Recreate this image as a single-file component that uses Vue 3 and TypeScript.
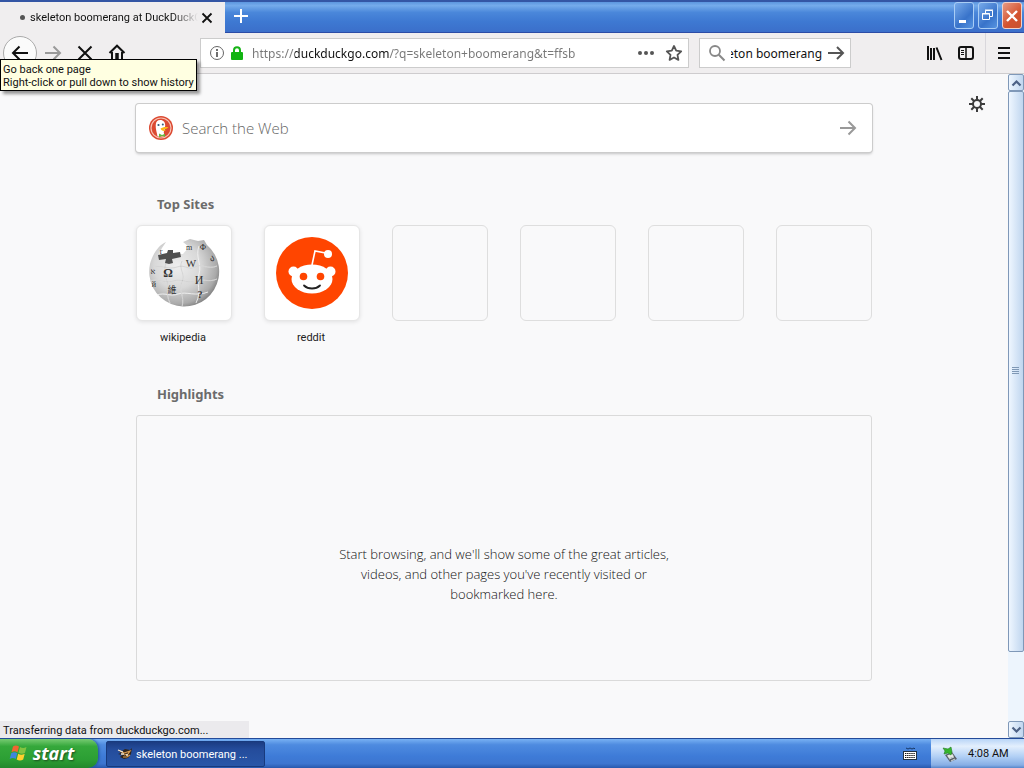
<script setup lang="ts">
import { onMounted, ref } from 'vue'

interface Site {
  name: string
}

const sites: Site[] = [{ name: 'wikipedia' }, { name: 'reddit' }]
const emptyTiles = 4
const address = ref<string>('https://duckduckgo.com/?q=skeleton+boomerang&t=ffsb')
const query = ref<string>('skeleton boomerang')
const webQuery = ref<string>('')
const queryBox = ref<HTMLInputElement | null>(null)

onMounted(() => {
  // Keep the end of a long query in view
  const box = queryBox.value
  if (box) box.scrollLeft = box.scrollWidth
})
</script>

<template>
  <div class="screen">
    <header class="titlebar">
      <div class="tab">
        <span class="tab-dot"></span>
        <span class="tab-title">skeleton boomerang at DuckDuckGo</span>
        <button class="tab-close" aria-label="Close tab">
          <svg width="12" height="12" viewBox="0 0 12 12"><path d="M1.5 1.5l9 9M10.5 1.5l-9 9" stroke="#111" stroke-width="1.800" fill="none" /></svg>
        </button>
      </div>
      <button class="new-tab" aria-label="New tab">
        <svg width="16" height="16" viewBox="0 0 16 16"><path d="M8 1v14M1 8h14" stroke="#fff" stroke-width="2" /></svg>
      </button>
      <div class="window-buttons">
        <button class="win" aria-label="Minimize">
          <svg width="18" height="22" viewBox="0 0 18 22"><path d="M4 16.500h7" stroke="#fff" stroke-width="3" /></svg>
        </button>
        <button class="win" aria-label="Restore">
          <svg width="18" height="22" viewBox="0 0 18 22" fill="none" stroke="#fff"><path d="M6.500 8V5.500h7v6H11M6 5h8" /><path d="M3.500 8.500h7v6h-7zM3 9h8" /></svg>
        </button>
        <button class="win win-close" aria-label="Close">
          <svg width="18" height="22" viewBox="0 0 18 22"><path d="M4 6l10 10M14 6L4 16" stroke="#fff" stroke-width="2.400" /></svg>
        </button>
      </div>
    </header>

    <nav class="toolbar">
      <button class="tool back" aria-label="Back">
        <svg width="18" height="16" viewBox="0 0 18 16" fill="none" stroke="#111" stroke-width="2"><path d="M17 8H2M8.500 1.500L2 8l6.500 6.500" /></svg>
      </button>
      <button class="tool" aria-label="Forward">
        <svg width="18" height="16" viewBox="0 0 18 16" fill="none" stroke="#999" stroke-width="2"><path d="M1 8h15M9.500 1.500L16 8l-6.500 6.500" /></svg>
      </button>
      <button class="tool" aria-label="Stop">
        <svg width="16" height="16" viewBox="0 0 16 16" fill="none" stroke="#111" stroke-width="2"><path d="M1.500 1.500l13 13M14.500 1.500l-13 13" /></svg>
      </button>
      <button class="tool" aria-label="Home">
        <svg width="18" height="18" viewBox="0 0 18 18" fill="none" stroke="#111" stroke-width="2"><path d="M1.500 9L9 1.700 16.500 9M4 8v8h10V8" /><path d="M9 9v7" stroke-width="3.500" /></svg>
      </button>

      <div class="tooltip" role="tooltip">Go back one page<br />Right-click or pull down to show history</div>

      <div class="field address">
        <svg width="16" height="16" viewBox="0 0 16 16"><circle cx="8" cy="8" r="6.500" fill="none" stroke="#666" /><path d="M8 4v2M8 7v5" stroke="#555" stroke-width="1.700" /></svg>
        <svg class="lock" width="14" height="16" viewBox="0 0 14 16"><path d="M4 8V5.200a3 3 0 0 1 6 0V8" fill="none" stroke="#16b316" stroke-width="2" /><rect x="1" y="7" width="12" height="8" rx="1" fill="#12b412" /></svg>
        <input v-model="address" class="url" type="text" aria-label="Address" spellcheck="false" />
        <button class="plain" aria-label="Page actions">
          <svg width="18" height="16" viewBox="0 0 18 16" fill="#555"><circle cx="3" cy="8" r="2" /><circle cx="9" cy="8" r="2" /><circle cx="15" cy="8" r="2" /></svg>
        </button>
        <button class="plain star" aria-label="Bookmark this page">
          <svg width="18" height="18" viewBox="0 0 18 18"><path d="M9 2l2.200 4.600 5 .7-3.700 3.500.9 5.100L9 13.500l-4.400 2.400.9-5.100L1.800 7.300l5-.7z" fill="none" stroke="#555" stroke-width="1.800" stroke-linejoin="round" /></svg>
        </button>
      </div>

      <div class="field search">
        <svg width="18" height="18" viewBox="0 0 18 18" fill="none" stroke="#888" stroke-width="1.800"><circle cx="7" cy="7" r="5" /><path d="M10.800 10.800L16.500 16.500" stroke-width="2" /></svg>
        <input ref="queryBox" v-model="query" class="query" type="text" aria-label="Search" spellcheck="false" />
        <button class="plain" aria-label="Search">
          <svg width="18" height="16" viewBox="0 0 18 16" fill="none" stroke="#555" stroke-width="2"><path d="M1 8h15M10 2l6 6-6 6" /></svg>
        </button>
      </div>

      <div class="extras">
        <button class="tool" aria-label="Library">
          <svg width="17" height="16" viewBox="0 0 17 16" fill="none" stroke="#111" stroke-width="2"><path d="M2 1v14M5 3v12M8 3v12M10.500 2.500L15.500 15" /></svg>
        </button>
        <button class="tool" aria-label="Sidebars">
          <svg width="16" height="16" viewBox="0 0 16 16" fill="none" stroke="#111"><rect x="1" y="2" width="14" height="12" rx="2" stroke-width="2" /><path d="M8 2v12" stroke-width="1.500" /><path d="M3 5.500h3M3 7.500h3M3 9.500h3" /></svg>
        </button>
        <button class="tool menu" aria-label="Open menu">
          <svg width="14" height="14" viewBox="0 0 14 14" stroke="#111" stroke-width="2"><path d="M1 2h12M1 7h12M1 12h12" /></svg>
        </button>
      </div>
    </nav>

    <div class="viewport">
      <main class="page">
        <button class="settings plain" aria-label="Customize your page">
          <svg width="18" height="18" viewBox="0 0 18 18" fill="none" stroke="#3c3c3c"><circle cx="9" cy="9" r="4" stroke-width="2" /><path d="M9 1v4M9 13v4M1 9h4M13 9h4M3.300 3.300l2.900 2.900M11.800 11.800l2.900 2.900M3.300 14.700l2.900-2.900M11.800 6.200l2.900-2.900" stroke-width="2" /></svg>
        </button>

        <div class="content">
          <form class="web-search" @submit.prevent>
            <svg width="24" height="24" viewBox="0 0 24 24">
              <circle cx="12" cy="12" r="12" fill="#dc4a32" />
              <circle cx="12" cy="12" r="10" fill="none" stroke="#f7c3b5" stroke-width="1.200" />
              <path d="M8.500 20.500C8 17 6.500 13 6.700 9c.2-3.500 1.800-5 4.500-5 3.300 0 5 2.300 5 5.500l-.5 4-1 2.500.8 4.500z" fill="#fff" />
              <circle cx="9.500" cy="9" r="1.100" fill="#315b79" /><circle cx="13.800" cy="8.500" r="1" fill="#315b79" />
              <path d="M11.500 12.500c2-1.500 5-2 8-1.300-1 1.300-3 1.800-5 2.300l2.500 1c-2 .8-5 .5-5.500-2z" fill="#fdb515" />
              <path d="M10 17.500l3 1.500 3-1.300v3l-3-.8-3 1.500z" fill="#65b83f" />
            </svg>
            <input v-model="webQuery" type="text" placeholder="Search the Web" aria-label="Search the Web" />
            <button class="plain" aria-label="Submit search">
              <svg width="18" height="16" viewBox="0 0 18 16" fill="none" stroke="#999" stroke-width="2"><path d="M1 8h15M9.500 1.500L16 8l-6.500 6.500" /></svg>
            </button>
          </form>

          <section>
            <h2>Top Sites</h2>
            <div class="tiles">
              <a v-for="site in sites" :key="site.name" class="site" href="#">
                <span class="tile">
                  <svg v-if="site.name === 'wikipedia'" width="74" height="74" viewBox="0 0 74 74">
                    <defs>
                      <radialGradient id="globe" cx=".4" cy=".4" r=".66">
                        <stop offset="0" stop-color="#eee" /><stop offset=".5" stop-color="#d8d8d8" /><stop offset=".85" stop-color="#aaa" /><stop offset="1" stop-color="#777" />
                      </radialGradient>
                    </defs>
                    <path d="M19 6L15 12l-4 8 8 1 9-3 8 0 6-7-6-5 7-3 8 2 6-1 3 5A35 35 0 1 1 3 28C6 17 12 9 19 6z" fill="url(#globe)" />
                    <path d="M7 31c9-2 15 3 23 0s12 4 18 0 13 3 22-1M3 45c10-3 14 3 23 0s14 3 22 0 13 2 22-2M10 59c8-3 13 2 21-1s18 3 30-2M18 20c3 8-3 13 1 22s-1 15 4 25M35 25c-4 8 4 13 0 21s3 14 0 25M52 10c-4 11 3 18 0 28s3 17-3 29" fill="none" stroke="#f2f2f2" stroke-width=".9" />
                    <path d="M7 31c9-2 15 3 23 0s12 4 18 0 13 3 22-1M3 45c10-3 14 3 23 0s14 3 22 0 13 2 22-2M18 20c3 8-3 13 1 22s-1 15 4 25M35 25c-4 8 4 13 0 21s3 14 0 25" fill="none" stroke="#aaa" stroke-width=".4" />
                    <path d="M11 19l9-2 1-3 5 0 0 3 7-1 1 5-9 2 1 4-4 1-4-1 1-4-7 1z" fill="#505050" />
                    <g fill="#333" font-family="Liberation Serif, serif" text-anchor="middle">
                      <text x="21" y="41" font-size="12" font-weight="bold">Ω</text>
                      <text x="44" y="31" font-size="11">W</text>
                      <text x="52" y="48" font-size="12">И</text>
                      <text x="53" y="62" font-size="10" font-weight="bold">?</text>
                      <text x="25" y="57" font-size="9" font-family="Noto Sans CJK SC, sans-serif">維</text>
                      <text x="56" y="14" font-size="8">Ф</text>
                      <text x="65" y="25" font-size="9">ა</text>
                      <text x="42" y="14" font-size="8">m</text>
                      <text x="6" y="38" font-size="8">א</text>
                      <text x="7" y="51" font-size="8">й</text>
                      <text x="14" y="18" font-size="8">r</text>
                    </g>
                  </svg>
                  <svg v-else width="74" height="74" viewBox="0 0 74 74">
                    <circle cx="37" cy="37" r="36" fill="#ff4500" />
                    <path d="M37 29l3-14 13 2.500" fill="none" stroke="#fff" stroke-width="1.600" />
                    <circle cx="53" cy="18" r="4" fill="#fff" />
                    <circle cx="18.500" cy="35.500" r="5" fill="#fff" /><circle cx="55.500" cy="35.500" r="5" fill="#fff" />
                    <ellipse cx="37" cy="43" rx="20.500" ry="14.500" fill="#fff" />
                    <circle cx="28.500" cy="40.500" r="3.800" fill="#ff4500" /><circle cx="45.500" cy="40.500" r="3.800" fill="#ff4500" />
                    <path d="M29 49.500c4 4 12 4 16 0" fill="none" stroke="#222" stroke-width="1.800" stroke-linecap="round" />
                  </svg>
                </span>
                <span class="site-name">{{ site.name }}</span>
              </a>
              <div v-for="n in emptyTiles" :key="n" class="tile empty"></div>
            </div>
          </section>

          <section>
            <h2>Highlights</h2>
            <div class="highlights">
              <p>Start browsing, and we'll show some of the great articles, videos, and other pages you've recently visited or bookmarked here.</p>
            </div>
          </section>
        </div>
        <div class="status" role="status">Transferring data from duckduckgo.com...</div>
      </main>

      <div class="scrollbar">
        <button class="scroll-arrow" aria-label="Scroll up">
          <svg width="11" height="8" viewBox="0 0 11 8"><path d="M1.500 6.500l4-4 4 4" fill="none" stroke="#4d6185" stroke-width="2.200" /></svg>
        </button>
        <div class="track">
          <div class="thumb">
            <svg width="8" height="8" viewBox="0 0 8 8"><path d="M0 .5h7M0 2.500h7M0 4.500h7M0 6.500h7" stroke="#7f98b5" /></svg>
          </div>
        </div>
        <button class="scroll-arrow" aria-label="Scroll down">
          <svg width="11" height="8" viewBox="0 0 11 8"><path d="M1.500 1.500l4 4 4-4" fill="none" stroke="#4d6185" stroke-width="2.200" /></svg>
        </button>
      </div>
    </div>

    <footer class="taskbar">
      <button class="start">
        <svg width="20" height="20" viewBox="0 0 20 20">
          <path d="M4 3.500c2-1.500 4-1.300 6 0L8.500 9.300c-2-1.200-4-1.300-6 0z" fill="#f26532" />
          <path d="M11 4c2 1.200 4 1.300 6.500 0L16 9.800c-2 1.200-4.200 1.200-6.500 0z" fill="#83c341" />
          <path d="M2.200 10.300c2-1.300 4-1.200 6 0L6.700 16c-2-1.300-4-1.200-6 0z" fill="#3d86dd" />
          <path d="M9.200 10.800c2 1.200 4.200 1.200 6.500 0L14.200 16.600c-2.300 1.200-4.500 1.100-6.500-.1z" fill="#ffd02e" />
        </svg>
        <span>start</span>
      </button>
      <button class="task">
        <svg width="16" height="16" viewBox="0 0 16 16">
          <path d="M1 4l4 1 3-2 5 1 2-2-1 6-3 4-4 1-4-2 2-2-4-1 3-1z" fill="#30251d" />
          <path d="M3 5l4 2 6-2-2 3-4 1M6 11l4 0 3-2" fill="none" stroke="#d99b4d" stroke-width="1.200" />
          <path d="M1 4l5 2M4 8l3 0M9 9l2 0" stroke="#f5ead8" stroke-width="1.300" />
        </svg>
        <span>skeleton boomerang ...</span>
      </button>
      <button class="keyboard" aria-label="Keyboard">
        <svg width="14" height="14" viewBox="0 0 14 14"><path d="M3 1l2 1 2-1 2 1 2-1 1 1" fill="none" stroke="#173867" /><rect x=".5" y="4.500" width="13" height="8" fill="#fff" stroke="#234" /><path d="M2 6.500h10M2 8.500h10M2 10.500h10" stroke="#111" stroke-width="1.200" stroke-dasharray="1.400 .7" /></svg>
      </button>
      <div class="tray">
        <svg width="16" height="16" viewBox="0 0 16 16"><path d="M3 9l7-3 5 7-7 3z" fill="#596068" /><path d="M5 9.500l5-2 2 3-5 2z" fill="#e3e7e2" /><path d="M7 13l5-2M9 15l4-2" stroke="#d5dbe0" /><path d="M1 2l5 1 3-2 1 5-1 3-3-2-4 1 1-3z" fill="#35b52c" stroke="#217c22" stroke-width=".6" /></svg>
        <time datetime="04:08">4:08 AM</time>
      </div>
    </footer>
  </div>
</template>

<style>
html,
body {
  margin: 0;
}
</style>

<style scoped>
.screen {
  display: flex;
  flex-direction: column;
  height: 100vh;
  overflow: hidden;
  background: #f9f9fa;
  color: #111;
  font: 11px/13px Roboto, "Noto Sans", sans-serif;
}
.screen * {
  box-sizing: border-box;
}
svg {
  display: block;
  flex: none;
}
button {
  display: flex;
  align-items: center;
  justify-content: center;
  flex: none;
  margin: 0;
  padding: 0;
  border: 0;
  background: none;
  color: inherit;
  font: inherit;
}
input {
  min-width: 0;
  flex: 1;
  padding: 0;
  border: 0;
  outline: 0;
  background: none;
  font: inherit;
}
.titlebar {
  display: flex;
  flex: none;
  height: 33px;
  border-top: 2px solid #3456a5;
  border-bottom: 1px solid #2c4ca6;
  background: linear-gradient(#5c96df, #75abeb 12%, #4a87da 35%, #3e79d2 65%, #3b6fca);
}
.tab {
  display: flex;
  align-items: center;
  width: 225px;
  margin-bottom: -1px;
  padding: 0 9px 0 20px;
  background: #f0eeef;
}
.tab-dot {
  width: 5px;
  height: 5px;
  margin-right: 5px;
  border-radius: 50%;
  background: #555;
}
.tab-title {
  flex: 1;
  overflow: hidden;
  white-space: nowrap;
  mask-image: linear-gradient(90deg, #000 85%, transparent);
}
.tab-close {
  width: 18px;
  height: 18px;
}
.new-tab {
  width: 32px;
  height: 28px;
}
.window-buttons {
  display: flex;
  gap: 4px;
  margin-left: auto;
  padding: 0 2px 0 0;
}
.win {
  width: 20px;
  height: 27px;
  border: 1px solid #a9cdf5;
  border-radius: 3px;
  background: linear-gradient(135deg, #78aaea, #3873ca 60%, #5794e0);
}
.win-close {
  border-color: #f3d1c8;
  background: linear-gradient(135deg, #e79983, #d4532f 60%, #c9532f);
}
.toolbar {
  position: relative;
  z-index: 2;
  display: flex;
  flex: none;
  align-items: center;
  height: 41px;
  padding: 0 2px 0 3px;
  border-bottom: 1px solid #ceccce;
  background: #f0eeef;
}
.tool {
  width: 32px;
  height: 32px;
}
.back {
  width: 34px;
  height: 34px;
  border: 1px solid #aaa;
  border-radius: 50%;
  background: #fbfbfb;
}
.tooltip {
  position: absolute;
  top: 26px;
  left: 0;
  padding: 3px 2px 1px;
  border: 1px solid #000;
  background: #ffffe1;
  box-shadow: 3px 3px 3px rgb(0 0 0 / 40%);
  white-space: nowrap;
}
.field {
  display: flex;
  align-items: center;
  height: 30px;
  border: 1px solid #ccc;
  background: #fff;
  font-family: "Noto Sans", sans-serif;
  font-size: 12px;
}
.address {
  flex: 1;
  margin-left: 67px;
  padding: 0 5px 0 8px;
}
.lock {
  margin: 0 8px 0 5px;
}
.url {
  height: 20px;
  background: linear-gradient(90deg, #777 43px, #111 43px, #111 137px, #777 137px);
  background-clip: text;
  color: transparent;
}
.star {
  margin-left: 10px;
}
.search {
  width: 152px;
  margin: 0 67px 0 10px;
  padding: 0 5px 0 8px;
}
.query {
  height: 20px;
  margin: 0 5px;
  color: #111;
}
.extras {
  display: flex;
  align-items: center;
}
.menu {
  width: 37px;
  height: 40px;
  margin-left: 3px;
  border-left: 1px solid #d9d7dc;
}
.viewport {
  display: flex;
  flex: 1;
  min-height: 0;
}
.page {
  position: relative;
  flex: 1;
  min-width: 0;
  overflow: hidden;
}
.settings {
  position: absolute;
  top: 21px;
  right: 22px;
}
.content {
  max-width: 736px;
  margin: 0 auto;
  padding-top: 30px;
}
.web-search {
  display: flex;
  align-items: center;
  height: 48px;
  margin: 0 0 43px;
  padding: 0 15px 0 13px;
  border-radius: 3px;
  background: #fff;
  box-shadow: 0 0 0 1px #ccc, 0 2px 3px rgb(0 0 0 / 22%);
  font-family: "Open Sans", "Noto Sans", sans-serif;
  font-size: 15px;
  font-weight: 300;
}
.web-search input {
  height: 24px;
  margin-left: 9px;
}
.web-search input::placeholder {
  color: #666;
  opacity: 1;
}
h2 {
  margin: 0 0 12px 21px;
  color: #6b6b6b;
  font-family: "Noto Sans", sans-serif;
  font-size: 13px;
  font-weight: 700;
  line-height: 18px;
}
.tiles {
  display: grid;
  grid-template-columns: repeat(6, 96px);
  justify-content: space-between;
  margin-bottom: 41px;
}
.site {
  color: #222;
  text-align: center;
  text-decoration: none;
}
.tile {
  display: flex;
  align-items: center;
  justify-content: center;
  height: 96px;
  border: 1px solid #e6e6e6;
  border-radius: 6px;
  background: #fff;
  box-shadow: 0 1px 4px rgb(0 0 0 / 10%);
}
.empty {
  border-color: #dedede;
  background: none;
  box-shadow: none;
}
.site-name {
  display: block;
  padding: 10px 2px 0 0;
}
.highlights {
  display: flex;
  justify-content: center;
  height: 266px;
  padding-top: 128px;
  border: 1px solid #dadada;
  border-radius: 3px;
}
.highlights p {
  width: 346px;
  margin: 0;
  color: #111;
  font-family: "Open Sans", "Noto Sans", sans-serif;
  font-size: 13px;
  font-weight: 300;
  line-height: 20px;
  text-align: center;
}
.status {
  position: absolute;
  bottom: 0;
  left: 0;
  width: 249px;
  height: 17px;
  padding: 3px 3px 1px;
  background: #ebeaed;
}
.scrollbar {
  display: flex;
  flex-direction: column;
  width: 16px;
  background: #edf5fd;
}
.scroll-arrow,
.thumb {
  border: 1px solid #7f98b8;
  border-radius: 2px;
  background: linear-gradient(90deg, #eef6ff, #c0d6ef);
}
.scroll-arrow {
  width: 16px;
  height: 17px;
}
.track {
  flex: 1;
}
.thumb {
  display: flex;
  align-items: center;
  justify-content: center;
  height: 89%;
}
.taskbar {
  display: flex;
  flex: none;
  align-items: stretch;
  height: 30px;
  border-top: 1px solid #244b99;
  background: linear-gradient(#78b1f3, #4e8be0 20%, #3e7bd7 60%, #3d75d0 85%, #2858ad);
  color: #fff;
}
.start {
  gap: 4px;
  width: 98px;
  padding: 0 17px 2px 2px;
  border-radius: 0 10px 10px 0;
  background: linear-gradient(#77cb72, #35a83b 25%, #2c9f34 70%, #22882c);
  box-shadow: 1px 0 3px #1e5290;
  font-family: "Open Sans", "Noto Sans", sans-serif;
  font-size: 18px;
  font-style: italic;
  font-weight: 700;
  line-height: 24px;
  text-shadow: 1px 1px 2px #1b4e20;
}
.task {
  justify-content: flex-start;
  gap: 3px;
  width: 159px;
  margin: 2px 0 1px 8px;
  padding-left: 10px;
  border: 1px solid #183a7d;
  border-radius: 2px;
  background: linear-gradient(#1b3c82, #244c9b 30%, #2956a8);
}
.keyboard {
  margin-left: auto;
  width: 42px;
}
.tray {
  display: flex;
  align-items: center;
  gap: 10px;
  width: 93px;
  padding-left: 11px;
  background: linear-gradient(#b9d5f7, #e3effd 25%, #b2d0f5 60%, #87aee5 90%, #5785c9);
  color: #111;
  white-space: nowrap;
}
</style>
